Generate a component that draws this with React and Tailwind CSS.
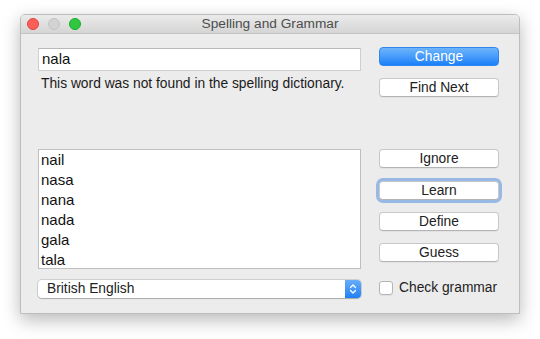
import React from "react";

const font = { fontFamily: '"Liberation Sans", Arial, sans-serif' };

function PushButton({ children, focused, className = "" }) {
  return (
    <button
      className={`block h-[19px] w-full rounded-[4px] bg-white border border-[#c8c8c8] border-b-[#b4b4b4] text-[13.8px] leading-none text-[#222] ${focused ? "shadow-[0_0_0_3px_rgba(96,152,224,0.6)]" : "shadow-[0_1px_0_rgba(0,0,0,0.04)]"} ${className}`}
    >
      {children}
    </button>
  );
}

function Stepper() {
  return (
    <div className="w-[16px] h-full rounded-r-[4px] bg-gradient-to-b from-[#66adf8] to-[#1c7ff5] flex items-center justify-center">
      <svg width="8" height="12" viewBox="0 0 8 12" fill="none" stroke="white" strokeWidth="1.3" strokeLinecap="round" strokeLinejoin="round">
        <path d="M1.5 4.5 L4 2 L6.5 4.5" />
        <path d="M1.5 7.5 L4 10 L6.5 7.5" />
      </svg>
    </div>
  );
}

export default function App() {
  const suggestions = ["nail", "nasa", "nana", "nada", "gala", "tala"];

  return (
    <div className="w-[540px] h-[339px] bg-white pt-[14px] pl-[20px]" style={font}>
      <div className="w-[500px] h-[300px] bg-[#ececec] border border-[#bdbdbd] rounded-t-[5px] shadow-[0_6px_18px_rgba(0,0,0,0.28)] flex flex-col overflow-hidden">
        {/* title bar */}
        <div className="shrink-0 h-[19px] relative flex items-center bg-gradient-to-b from-[#ebebeb] to-[#d5d5d5] border-b border-[#c4c4c4]">
          <div className="flex items-center gap-[9px] pl-[6px]">
            <div className="w-[12px] h-[12px] rounded-full bg-[#fc5f57] border border-[#e0443e]" />
            <div className="w-[12px] h-[12px] rounded-full bg-[#d3d3d3] border border-[#c2c2c2]" />
            <div className="w-[12px] h-[12px] rounded-full bg-[#2fc840] border border-[#1aab29]" />
          </div>
          <div className="absolute inset-0 flex items-center justify-center text-[13.7px] text-[#4d4d4d]">
            Spelling and Grammar
          </div>
        </div>

        {/* content */}
        <div className="flex pl-[17px] pr-[20px] gap-[18px]">
          {/* left column */}
          <div className="w-[323px] flex flex-col">
            <div className="mt-[14px] h-[23px] bg-white border border-[#cfcfcf] border-t-[#b9b9b9] flex items-center pl-[3px] text-[15px] text-[#111]">
              nala
            </div>
            <div className="mt-[5px] h-[16px] leading-[16px] pl-[3px] text-[13.8px] text-[#1a1a1a]">
              This word was not found in the spelling dictionary.
            </div>
            <div className="mt-[57px] h-[120px] bg-white border border-[#bfbfbf] pl-[2px]">
              {suggestions.map((s) => (
                <div key={s} className="h-[20px] leading-[20px] text-[15px] text-[#111]">
                  {s}
                </div>
              ))}
            </div>
            <div className="mt-[11px] h-[18px] bg-white rounded-[4px] flex shadow-[0_0_0_1px_rgba(0,0,0,0.12),0_1px_1px_rgba(0,0,0,0.18)]">
              <div className="flex-1 flex items-center pl-[9px] text-[13.8px] text-[#222]">British English</div>
              <Stepper />
            </div>
          </div>

          {/* right column */}
          <div className="w-[120px] flex flex-col">
            <button className="block mt-[13px] h-[19px] w-full rounded-[4px] bg-gradient-to-b from-[#6db5fb] to-[#1580f9] border border-[#2f87ee] text-[13.8px] leading-none text-white">
              Change
            </button>
            <PushButton className="mt-[12px]">Find Next</PushButton>
            <PushButton className="mt-[52px]">Ignore</PushButton>
            <PushButton focused className="mt-[13px]">Learn</PushButton>
            <PushButton className="mt-[12px]">Define</PushButton>
            <PushButton className="mt-[12px]">Guess</PushButton>
            <label className="mt-[17px] h-[18px] flex items-center gap-[6px] text-[13.8px] text-[#222]">
              <span className="w-[14px] h-[14px] bg-white rounded-[3px] border border-[#b5b5b5] shadow-[0_1px_0_rgba(0,0,0,0.05)]" />
              Check grammar
            </label>
          </div>
        </div>
      </div>
    </div>
  );
}
